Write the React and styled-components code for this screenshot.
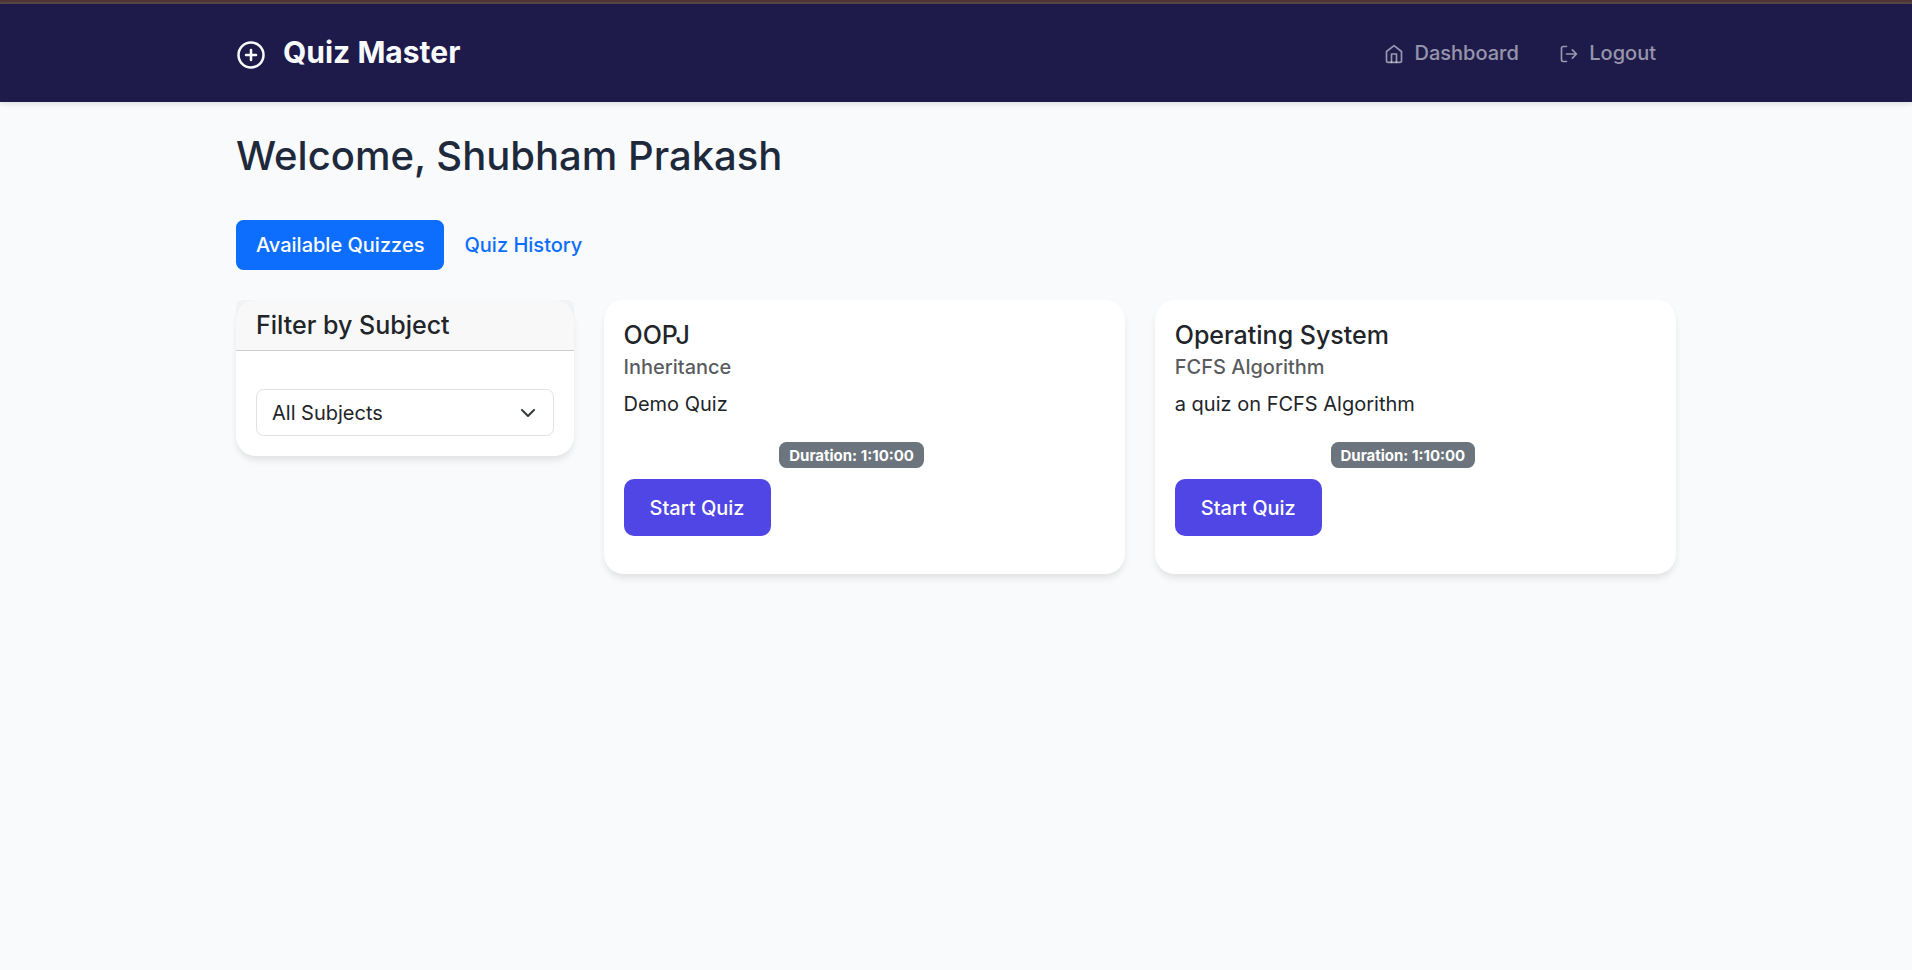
import React from 'react';
import styled, { createGlobalStyle } from 'styled-components';

const GlobalStyle = createGlobalStyle`
  *, *::before, *::after { box-sizing: border-box; }
  body {
    margin: 0;
    min-height: 100vh;
    background: #f8fafc;
    color: #212529;
    font-family: Inter, "Liberation Sans", sans-serif;
    font-size: 20px;
    line-height: 1.5;
  }
  h2, h5, h6, p { margin: 0; }
`;

const TopStrip = styled.div`
  height: 4px;
  background: #513437;
  border-bottom: 2px solid #564643;
`;

const Navbar = styled.nav`
  height: 98px;
  padding: 0 236px;
  display: flex;
  align-items: center;
  justify-content: space-between;
  background: #1e1b4b;
  box-shadow: 0 2.5px 5px rgba(0, 0, 0, 0.1);
`;

const Brand = styled.a`
  display: flex;
  align-items: center;
  gap: 17px;
  padding-bottom: 2px;
  color: #f8fafc;
  font-size: 30px;
  font-weight: 700;
  line-height: 45px;
  svg { margin-top: 6px; }
`;

const NavLinks = styled.div`
  display: flex;
`;

const NavLink = styled.a`
  display: flex;
  align-items: center;
  gap: 10.5px;
  padding: 10px 20px;
  color: rgba(255, 255, 255, 0.55);
  font-weight: 500;
  svg { margin-top: 2px; }
`;

const Main = styled.main`
  padding: 30px 236px;
`;

const Title = styled.h2`
  color: #1e293b;
  font-size: 40px;
  font-weight: 500;
  line-height: 48px;
`;

const Tabs = styled.div`
  display: flex;
  margin: 40px 0 30px;
`;

const Tab = styled.button`
  height: 50px;
  padding: 0 20px;
  border: 0;
  border-radius: 7.5px;
  background: ${(p) => (p.$active ? '#0d6efd' : 'transparent')};
  color: ${(p) => (p.$active ? '#fff' : '#0d6efd')};
  font: 500 20px/30px Inter, sans-serif;
`;

const Columns = styled.div`
  display: grid;
  grid-template-columns: 337.5px 521.25px 521.25px;
  gap: 30px;
  align-items: start;
`;

const Card = styled.section`
  border-radius: 20px;
  background: #fff;
  box-shadow: 0 5px 7.5px -1px rgba(0, 0, 0, 0.1);
`;

const CardHeader = styled.div`
  height: 51px;
  padding: 10px 20px;
  border-bottom: 1px solid rgba(0, 0, 0, 0.176);
  border-radius: 6.25px 6.25px 0 0;
  background: rgba(33, 37, 41, 0.03);
`;

const CardTitle = styled.h5`
  font-size: 25px;
  font-weight: 500;
  line-height: 30px;
`;

const FilterBody = styled.div`
  padding: 38px 20px 20px;
`;

const Select = styled.div`
  height: 47px;
  padding: 0 17px 0 15px;
  display: flex;
  align-items: center;
  justify-content: space-between;
  border: 1px solid #dee2e6;
  border-radius: 7.5px;
`;

const QuizCard = styled(Card)`
  height: 274px;
  padding: 20px;
`;

const Subject = styled.h6`
  margin-top: 5px;
  color: rgba(33, 37, 41, 0.75);
  font-size: 20px;
  font-weight: 500;
  line-height: 24px;
`;

const Description = styled.p`
  margin-top: 10px;
`;

const BadgeRow = styled.div`
  display: flex;
  justify-content: center;
  margin-top: 23px;
  padding-right: 25px;
`;

const Badge = styled.span`
  height: 26px;
  padding: 0 9.75px;
  border-radius: 7.5px;
  background: #6c757d;
  color: #fff;
  font-size: 15px;
  font-weight: 700;
  line-height: 27px;
`;

const StartButton = styled.button`
  display: block;
  width: 147px;
  height: 57px;
  margin-top: 11px;
  padding: 0;
  border: 0;
  border-radius: 10px;
  background: #4f46e5;
  color: #fff;
  font: 500 20px/30px Inter, sans-serif;
`;

const Icon = ({ size, children }) => (
  <svg width={size} height={size} viewBox="0 0 24 24" fill="none" stroke="currentColor"
    strokeWidth="2" strokeLinecap="round" strokeLinejoin="round">
    {children}
  </svg>
);

const quizzes = [
  { title: 'OOPJ', subject: 'Inheritance', description: 'Demo Quiz', duration: '1:10:00' },
  { title: 'Operating System', subject: 'FCFS Algorithm', description: 'a quiz on FCFS Algorithm', duration: '1:10:00' },
];

export default function App() {
  return (
    <>
      <GlobalStyle />
      <TopStrip />
      <Navbar>
        <Brand>
          <Icon size={30}>
            <circle cx="12" cy="12" r="10" />
            <path d="M12 8v8M8 12h8" />
          </Icon>
          Quiz Master
        </Brand>
        <NavLinks>
          <NavLink>
            <Icon size={20}>
              <path d="M3 9l9-7 9 7v11a2 2 0 0 1-2 2H5a2 2 0 0 1-2-2z" />
              <path d="M9 22V12h6v10" />
            </Icon>
            Dashboard
          </NavLink>
          <NavLink>
            <Icon size={20}>
              <path d="M9 21H5a2 2 0 0 1-2-2V5a2 2 0 0 1 2-2h4" />
              <path d="M16 17l5-5-5-5M21 12H9" />
            </Icon>
            Logout
          </NavLink>
        </NavLinks>
      </Navbar>
      <Main>
        <Title>Welcome, Shubham Prakash</Title>
        <Tabs>
          <Tab $active>Available Quizzes</Tab>
          <Tab>Quiz History</Tab>
        </Tabs>
        <Columns>
          <Card>
            <CardHeader><CardTitle>Filter by Subject</CardTitle></CardHeader>
            <FilterBody>
              <Select>
                All Subjects
                <svg width="16" height="16" viewBox="0 0 16 16" fill="none" stroke="#343a40"
                  strokeWidth="2" strokeLinecap="round" strokeLinejoin="round">
                  <path d="m2 5 6 6 6-6" />
                </svg>
              </Select>
            </FilterBody>
          </Card>
          {quizzes.map((q) => (
            <QuizCard key={q.title}>
              <CardTitle>{q.title}</CardTitle>
              <Subject>{q.subject}</Subject>
              <Description>{q.description}</Description>
              <BadgeRow><Badge>Duration: {q.duration}</Badge></BadgeRow>
              <StartButton>Start Quiz</StartButton>
            </QuizCard>
          ))}
        </Columns>
      </Main>
    </>
  );
}
